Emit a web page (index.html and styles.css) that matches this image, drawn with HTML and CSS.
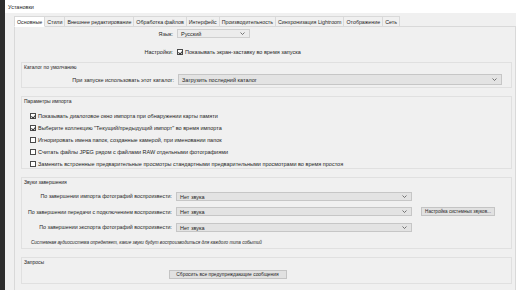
FILE: index.html
```html
<!DOCTYPE html>
<html lang="ru">
<head>
  <meta charset="UTF-8" />
  <title>Установки</title>
  <link rel="stylesheet" href="styles.css">
</head>
<body>
  <div class="edge"></div>
  <div class="window">
    <div class="titlebar">Установки</div>
    <div class="main">
      <div class="tabs">
        <div class="tab active">Основные</div>
        <div class="tab">Стили</div>
        <div class="tab">Внешнее редактирование</div>
        <div class="tab">Обработка файлов</div>
        <div class="tab">Интерфейс</div>
        <div class="tab">Производительность</div>
        <div class="tab">Синхронизация Lightroom</div>
        <div class="tab">Отображение</div>
        <div class="tab">Сеть</div>
      </div>

      <div class="panel">
        <div class="row lang-row">
          <div class="label">Язык:</div>
          <div class="select lang-select">Русский <span class="chev"><svg width="5" height="3" viewBox="0 0 5 3"><polyline points="0.5,0.5 2.5,2.5 4.5,0.5" fill="none" stroke="#555" stroke-width="0.8"/></svg></span></div>
        </div>
        <div class="row splash-row">
          <div class="label">Настройки:</div>
          <div class="check on"></div>
          <div class="check-text">Показывать экран-заставку во время запуска</div>
        </div>

        <div class="group catalog">
          <div class="group-title">Каталог по умолчанию</div>
          <div class="row">
            <div class="label">При запуске использовать этот каталог:</div>
            <div class="select catalog-select">Загрузить последний каталог <span class="chev"><svg width="5" height="3" viewBox="0 0 5 3"><polyline points="0.5,0.5 2.5,2.5 4.5,0.5" fill="none" stroke="#555" stroke-width="0.8"/></svg></span></div>
          </div>
        </div>

        <div class="group import">
          <div class="group-title">Параметры импорта</div>
          <div class="check-row"><div class="check on"></div><div class="check-text">Показывать диалоговое окно импорта при обнаружении карты памяти</div></div>
          <div class="check-row"><div class="check on"></div><div class="check-text">Выберите коллекцию "Текущий/предыдущий импорт" во время импорта</div></div>
          <div class="check-row"><div class="check"></div><div class="check-text">Игнорировать имена папок, созданные камерой, при именовании папок</div></div>
          <div class="check-row"><div class="check"></div><div class="check-text">Считать файлы JPEG рядом с файлами RAW отдельными фотографиями</div></div>
          <div class="check-row"><div class="check"></div><div class="check-text">Заменить встроенные предварительные просмотры стандартными предварительными просмотрами во время простоя</div></div>
        </div>

        <div class="group sounds">
          <div class="group-title">Звуки завершения</div>
          <div class="row sound-row">
            <div class="label"><span>По завершении импорта фотографий воспроизвести:</span></div>
            <div class="select sound-select">Нет звука <span class="chev"><svg width="5" height="3" viewBox="0 0 5 3"><polyline points="0.5,0.5 2.5,2.5 4.5,0.5" fill="none" stroke="#555" stroke-width="0.8"/></svg></span></div>
          </div>
          <div class="row sound-row">
            <div class="label"><span>По завершении передачи с подключением воспроизвести:</span></div>
            <div class="select sound-select">Нет звука <span class="chev"><svg width="5" height="3" viewBox="0 0 5 3"><polyline points="0.5,0.5 2.5,2.5 4.5,0.5" fill="none" stroke="#555" stroke-width="0.8"/></svg></span></div>
            <div class="button sys-sounds">Настройка системных звуков...</div>
          </div>
          <div class="row sound-row">
            <div class="label"><span>По завершении экспорта фотографий воспроизвести:</span></div>
            <div class="select sound-select">Нет звука <span class="chev"><svg width="5" height="3" viewBox="0 0 5 3"><polyline points="0.5,0.5 2.5,2.5 4.5,0.5" fill="none" stroke="#555" stroke-width="0.8"/></svg></span></div>
          </div>
          <div class="note">Системная аудиосистема определяет, какие звуки будут воспроизводиться для каждого типа событий</div>
        </div>

        <div class="group prompts">
          <div class="group-title">Запросы</div>
          <div class="prompts-body">
            <div class="button">Сбросить все предупреждающие сообщения</div>
          </div>
        </div>
      </div>
    </div>
  </div>
</body>
</html>
```

FILE: styles.css
```css
html, body {
  margin: 0;
  padding: 0;
  height: 100%;
  overflow: hidden;
}

body {
  display: flex;
  font-family: "Liberation Sans", Arial, sans-serif;
  font-size: 5.5px;
  color: #1e1e1e;
  background: #f0f0f0;
  white-space: nowrap;
}

.edge {
  width: 5px;
  background: #2d2d2d;
  flex-shrink: 0;
}

.window {
  flex: 1;
  display: flex;
  flex-direction: column;
}

.titlebar {
  height: 13px;
  line-height: 14px;
  background: #fff;
  padding-left: 3px;
}

.main {
  flex: 1;
  background: #f0f0f0;
  padding: 3px 0 0 9px;
}

/* вкладки */
.tabs {
  display: flex;
  height: 11px;
  margin-bottom: -1px;
  position: relative;
  font-size: 5.3px;
}

.tab {
  padding: 0 2px;
  line-height: 10px;
  border: 1px solid #d9d9d9;
  border-left: none;
  background: #f0f0f0;
}

.tab:first-child {
  border-left: 1px solid #d9d9d9;
}

.tab.active {
  background: #fff;
  border-bottom-color: #fff;
}

.panel {
  border: 1px solid #d9d9d9;
  height: 100%;
  padding-top: 2px;
  box-sizing: border-box;
}

.row {
  display: flex;
  align-items: center;
}

.label {
  width: 158px;
  display: flex;
  justify-content: flex-end;
  padding-right: 2px;
  flex-shrink: 0;
}

.select {
  position: relative;
  height: 9px;
  line-height: 8px;
  box-sizing: border-box;
  padding-left: 3px;
  background: #e3e3e3;
  border: 1px solid #c6c6c6;
}

.chev {
  position: absolute;
  right: 4px;
  top: 2px;
  line-height: 0;
}

.lang-select {
  width: 73px;
  background: #ececec;
  border-color: #cfcfcf;
  margin-left: 2px;
}

.splash-row {
  margin-top: 11px;
}

.splash-row .check {
  margin-left: 2px;
}

.check {
  width: 6px;
  height: 6px;
  box-sizing: border-box;
  border: 1px solid #4a4a4a;
  background: #fff;
  position: relative;
  flex-shrink: 0;
  margin-right: 2px;
}

.check.on::after {
  content: "";
  position: absolute;
  left: 1px;
  top: 0;
  width: 1.5px;
  height: 3px;
  border: solid #333;
  border-width: 0 0.8px 0.8px 0;
  transform: rotate(40deg);
}

/* группы */
.group {
  margin: 8px 3px 0 6px;
  border: 1px solid #e0e0e0;
  padding: 1px 0 0 2px;
}

.catalog {
  height: 26px;
  margin-top: 7px;
  box-sizing: border-box;
}

.group-title {
  line-height: 7px;
  font-size: 5px;
}

.catalog .row {
  margin-top: 3px;
}

.catalog .label {
  width: 150px;
}

.catalog-select {
  flex: 1;
  height: 11px;
  line-height: 10px;
  margin: 0 9px 0 2px;
}

.catalog .chev {
  top: 3px;
}

.import {
  height: 73px;
  box-sizing: border-box;
}

.import .group-title {
  margin-bottom: 5px;
}

.check-row {
  display: flex;
  align-items: center;
  height: 12px;
  padding-left: 6px;
}

.sounds {
  height: 72px;
  box-sizing: border-box;
}

.sounds .group-title {
  margin-bottom: 5px;
}

.sound-row {
  height: 10px;
  margin-bottom: 5.5px;
}

.sound-row .label {
  width: 148px;
  font-size: 5.3px;
}

.sound-select {
  width: 236px;
  margin-left: 2px;
}

.button {
  height: 9px;
  line-height: 8px;
  box-sizing: border-box;
  padding: 0 5px;
  background: #e1e1e1;
  border: 1px solid #c4c4c4;
  font-size: 4.9px;
}

.sys-sounds {
  margin-left: 9px;
  width: 74px;
  padding: 0;
  text-align: center;
  font-size: 4.6px;
}

.note {
  font-style: italic;
  font-size: 4.6px;
  margin: 8px 0 0 7px;
}

.prompts {
  height: 27px;
  box-sizing: border-box;
}

.prompts-body {
  display: flex;
  justify-content: center;
  margin-top: 4px;
}

.prompts-body .button {
  width: 118px;
  text-align: center;
  margin-left: -80px;
}
```
